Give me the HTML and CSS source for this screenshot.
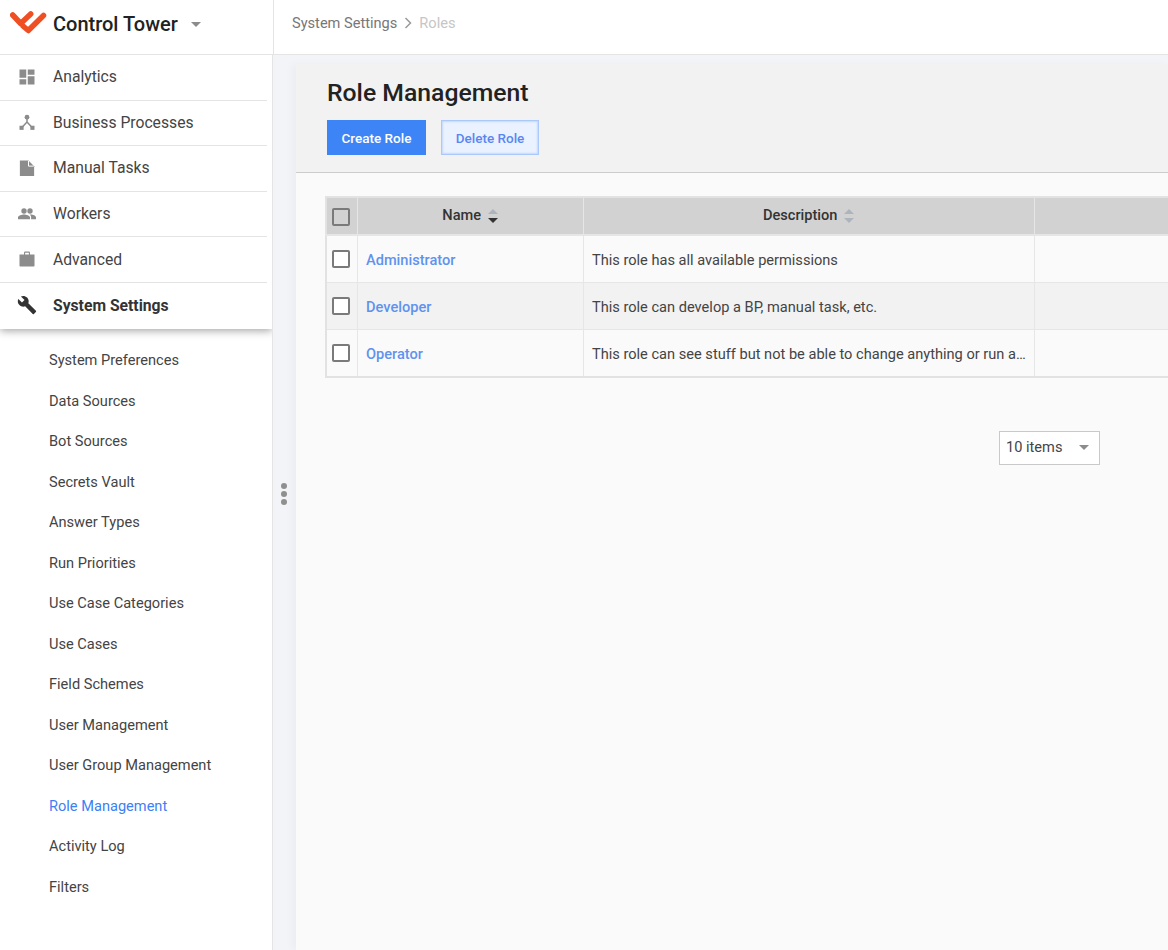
FILE: index.html
```html
<!DOCTYPE html>
<html lang="en">
<head>
    <meta charset="UTF-8">
    <title>Role Management</title>
    <link rel="stylesheet" href="styles.css">
</head>
<body>
    <div class="app">
        <div class="sidebar">
            <div class="brand">
                <svg class="brand-logo" width="37" height="25" viewBox="0 0 37 25">
                    <path d="M2.700 6 L10.700 14.500 L20.700 5 M13 17 L18.300 21.500 L33.500 6.500" fill="none" stroke="#f04e23" stroke-width="5.500" stroke-linecap="round" stroke-linejoin="round"/>
                </svg>
                <span class="brand-name">Control Tower</span>
                <span class="caret brand-caret"></span>
            </div>
            <div class="sidebar-body">
                <div class="nav-main">
                    <div class="nav-item">
                        <svg class="nav-icon" viewBox="0 0 24 24"><path d="M2 2h9v11H2zM13 2h9v7h-9zM13 11h9v11h-9zM2 15h9v7H2z"/></svg>
                        <span>Analytics</span>
                    </div>
                    <div class="nav-item">
                        <svg class="nav-icon" viewBox="0 0 24 24"><circle cx="12" cy="5.500" r="3.200"/><rect x="2" y="17" width="5.500" height="5.500"/><rect x="16.500" y="17" width="5.500" height="5.500"/><path d="M12 6v6.500M12 12L5.500 19M12 12l6.500 7" fill="none" stroke="#8c8c8c" stroke-width="2"/></svg>
                        <span>Business Processes</span>
                    </div>
                    <div class="nav-item">
                        <svg class="nav-icon" viewBox="0 0 24 24"><path d="M2.500 2H14l7.500 7.500V22.500H2.500z"/><path d="M14 2.500v7h7" fill="none" stroke="#fff" stroke-width="1.300"/></svg>
                        <span>Manual Tasks</span>
                    </div>
                    <div class="nav-item">
                        <svg class="nav-icon" viewBox="0 0 24 24"><circle cx="8" cy="8" r="3.600"/><circle cx="16" cy="8" r="3.600"/><path d="M0 19v-2.500C0 14 5 12.500 8 12.500s8 1.500 8 4V19zM17.500 19v-2.500c0-1.500-.8-2.800-2-3.700.5-.3 1-.3 1.500-.3 3 0 7 1.500 7 4V19z"/></svg>
                        <span>Workers</span>
                    </div>
                    <div class="nav-item">
                        <svg class="nav-icon" viewBox="0 0 24 24"><path d="M8 6V3.500A1.500 1.500 0 0 1 9.500 2h5A1.500 1.500 0 0 1 16 3.500V6h6v15a1 1 0 0 1-1 1H3a1 1 0 0 1-1-1V6zm1.500 0h5V3.500h-5z" fill-rule="evenodd"/></svg>
                        <span>Advanced</span>
                    </div>
                    <div class="nav-item nav-active">
                        <svg class="nav-icon" viewBox="0 0 24 24"><path d="M22.700 19l-9.100-9.100c.9-2.300.4-5-1.500-6.900-2-2-5-2.400-7.400-1.300L9 6 6 9 1.600 4.700C.4 7.100.9 10.100 2.900 12.100c1.900 1.900 4.600 2.400 6.900 1.500l9.100 9.100c.4.400 1 .4 1.400 0l2.300-2.300c.5-.4.500-1.100.100-1.400z"/></svg>
                        <span>System Settings</span>
                    </div>
                </div>
                <div class="nav-sub">
                    <div class="sub-item">System Preferences</div>
                    <div class="sub-item">Data Sources</div>
                    <div class="sub-item">Bot Sources</div>
                    <div class="sub-item">Secrets Vault</div>
                    <div class="sub-item">Answer Types</div>
                    <div class="sub-item">Run Priorities</div>
                    <div class="sub-item">Use Case Categories</div>
                    <div class="sub-item">Use Cases</div>
                    <div class="sub-item">Field Schemes</div>
                    <div class="sub-item">User Management</div>
                    <div class="sub-item">User Group Management</div>
                    <div class="sub-item sub-active">Role Management</div>
                    <div class="sub-item">Activity Log</div>
                    <div class="sub-item">Filters</div>
                </div>
            </div>
        </div>

        <div class="main">
            <div class="topbar">
                <span class="crumb">System Settings</span>
                <svg class="crumb-sep" width="8" height="12" viewBox="0 0 8 12"><path d="M1.500 1l5 5-5 5" fill="none" stroke="#9a9a9a" stroke-width="1.500"/></svg>
                <span class="crumb crumb-current">Roles</span>
            </div>
            <div class="workspace">
                <div class="resizer">
                    <span class="dot"></span>
                    <span class="dot"></span>
                    <span class="dot"></span>
                </div>
                <div class="panel">
                    <div class="panel-header">
                        <h1 class="panel-title">Role Management</h1>
                        <div class="actions">
                            <button class="btn btn-primary">Create Role</button>
                            <button class="btn btn-secondary">Delete Role</button>
                        </div>
                    </div>
                    <div class="panel-body">
                        <table class="grid">
                            <thead>
                                <tr>
                                    <th class="col-check"><span class="checkbox"></span></th>
                                    <th class="col-name">Name <span class="sort sort-down"></span></th>
                                    <th class="col-desc">Description <span class="sort"></span></th>
                                    <th class="col-rest"></th>
                                </tr>
                            </thead>
                            <tbody>
                                <tr>
                                    <td><span class="checkbox"></span></td>
                                    <td><a class="role-link">Administrator</a></td>
                                    <td class="desc">This role has all available permissions</td>
                                    <td></td>
                                </tr>
                                <tr class="row-alt">
                                    <td><span class="checkbox"></span></td>
                                    <td><a class="role-link">Developer</a></td>
                                    <td class="desc">This role can develop a BP, manual task, etc.</td>
                                    <td></td>
                                </tr>
                                <tr class="row-last">
                                    <td><span class="checkbox"></span></td>
                                    <td><a class="role-link">Operator</a></td>
                                    <td class="desc">This role can see stuff but not be able to change anything or run anything at all</td>
                                    <td></td>
                                </tr>
                            </tbody>
                        </table>
                        <div class="pager">
                            <div class="page-size">
                                <span>10 items</span>
                                <span class="caret"></span>
                            </div>
                        </div>
                    </div>
                </div>
            </div>
        </div>
    </div>
</body>
</html>
```

FILE: styles.css
```css
* {
    margin: 0;
    padding: 0;
    box-sizing: border-box;
}

html, body {
    height: 100%;
    overflow: hidden;
}

body {
    font-family: Roboto, 'Liberation Sans', sans-serif;
    font-size: 15.7px;
    color: #333;
    background: #fff;
}

.app {
    display: flex;
    height: 950px;
}

/* sidebar */
.sidebar {
    width: 274px;
    flex-shrink: 0;
    background: #f2f4f8;
}

.brand {
    height: 55px;
    display: flex;
    align-items: center;
    padding: 0 0 6px 10px;
    background: #fff;
    border-right: 1px solid #e4e4e4;
    border-bottom: 1px solid #e4e4e4;
}

.brand-logo {
    margin-right: 6px;
    margin-top: -5px;
}

.brand-name {
    font-size: 20px;
    font-weight: 500;
    color: #222;
}

.brand-caret {
    margin-left: 13px;
}

.caret {
    display: inline-block;
    width: 0;
    height: 0;
    border-left: 5px solid transparent;
    border-right: 5px solid transparent;
    border-top: 5px solid #8c8c8c;
}

.sidebar-body {
    width: 273px;
    height: 895px;
    background: #fff;
    border-right: 1px solid #e4e4e4;
}

.nav-main {
    box-shadow: 0 2px 8px rgba(0, 0, 0, 0.35);
    clip-path: inset(0 0 -20px 0);
    background: #fff;
}

.nav-item {
    width: 267px;
    height: 45.6px;
    display: flex;
    align-items: center;
    padding-left: 18px;
    padding-bottom: 1px;
    border-bottom: 1px solid #e4e4e4;
    color: #444;
}

.nav-item:last-child {
    width: 272px;
    border-bottom: none;
}

.nav-icon {
    width: 18px;
    height: 18px;
    fill: #8c8c8c;
    margin-right: 17px;
    flex-shrink: 0;
}

.nav-active {
    font-weight: 700;
    color: #333;
}

.nav-active .nav-icon {
    fill: #333;
    width: 20px;
    height: 20px;
    margin-left: -1px;
    margin-right: 16px;
}

.nav-sub {
    padding-top: 11.5px;
}

.sub-item {
    height: 40.5px;
    line-height: 40.5px;
    padding-left: 49px;
    font-size: 14.6px;
    color: #444;
}

.sub-active {
    color: #3d7ff5;
}

/* main area */
.main {
    flex: 1;
    min-width: 0;
    display: flex;
    flex-direction: column;
}

.topbar {
    height: 55px;
    flex-shrink: 0;
    display: flex;
    align-items: center;
    padding-left: 18px;
    padding-bottom: 8px;
    background: #fff;
    border-bottom: 1px solid #e4e4e4;
    font-size: 14.6px;
}

.crumb {
    color: #777;
}

.crumb-sep {
    margin: 0 7px;
}

.crumb-current {
    color: #c6c6c6;
}

.workspace {
    flex: 1;
    display: flex;
    background: #f2f4f8;
    padding-top: 9px;
}

.resizer {
    width: 22px;
    flex-shrink: 0;
    display: flex;
    flex-direction: column;
    align-items: center;
    gap: 2px;
    padding-top: 419px;
    padding-right: 2px;
}

.dot {
    width: 6px;
    height: 6px;
    border-radius: 50%;
    background: #8f8f8f;
}

.panel {
    flex: 1;
    min-width: 0;
    background: #fafafa;
    box-shadow: -4px 0 8px rgba(0, 0, 0, 0.03);
}

.panel-header {
    height: 109px;
    padding: 14px 0 0 31px;
    background: #f2f2f2;
    border-bottom: 1px solid #ccc;
}

.panel-title {
    font-size: 24.75px;
    font-weight: 500;
    line-height: 30px;
    color: #222;
}

.actions {
    display: flex;
    gap: 15px;
    margin-top: 12px;
}

.btn {
    height: 35px;
    font-family: inherit;
    font-size: 13.5px;
    font-weight: 500;
    border: none;
}

.btn-primary {
    width: 99px;
    background: #3d84f7;
    color: #fff;
}

.btn-secondary {
    width: 98px;
    background: #ebf2ff;
    color: #5a86ef;
    border: 1px solid #abc8fb;
    box-shadow: inset 0 0 2px 1px #c3d8fc;
}

.panel-body {
    padding: 23px 0 0 29px;
    overflow: hidden;
}

.grid {
    width: 1000px;
    table-layout: fixed;
    border-collapse: collapse;
    border: 2px solid #e2e2e2;
    font-size: 14.6px;
}

.grid th {
    height: 38px;
    padding-bottom: 2px;
    background: #d2d2d2;
    font-weight: 500;
    color: #333;
    border-right: 1px solid #e6e6e6;
    border-bottom: 2px solid #e6e6e6;
    text-align: center;
}

.grid th:first-child {
    padding: 0 2px 0 0;
}

.grid td {
    height: 47px;
    padding: 3px 7px 0 8.5px;
    border-right: 1px solid #e6e6e6;
    border-bottom: 1px solid #e6e6e6;
    color: #444;
}

.grid td:first-child {
    padding: 0 2px 0 0;
    text-align: center;
}

.grid .row-last td {
    height: 48px;
    padding-bottom: 1px;
}

.col-check {
    width: 31px;
}

.col-name {
    width: 226px;
}

.col-desc {
    width: 451px;
}

.row-alt td {
    background: #f2f2f2;
}

.desc {
    white-space: nowrap;
    overflow: hidden;
    text-overflow: ellipsis;
}

.role-link {
    color: #5f93ee;
    font-weight: 500;
}

.checkbox {
    display: inline-block;
    width: 18px;
    height: 18px;
    border: 2px solid #7a7a7a;
    border-radius: 2px;
    vertical-align: middle;
    background: #fff;
}

th .checkbox {
    background: transparent;
}

.sort {
    display: inline-block;
    position: relative;
    width: 10px;
    height: 14px;
    margin-left: 3px;
    vertical-align: -3px;
}

.sort::before, .sort::after {
    content: "";
    position: absolute;
    left: 0;
    border-left: 5px solid transparent;
    border-right: 5px solid transparent;
}

.sort::before {
    top: 0;
    border-bottom: 5px solid #aeb4bb;
}

.sort::after {
    bottom: 0;
    border-top: 5px solid #aeb4bb;
}

.sort-down::after {
    border-top-color: #333;
}

.pager {
    width: 775px;
    display: flex;
    justify-content: flex-end;
    margin-top: 53px;
}

.page-size {
    width: 101px;
    height: 34px;
    display: flex;
    align-items: center;
    justify-content: space-between;
    padding: 0 10px 2px 6px;
    background: #fff;
    border: 1px solid #c9c9c9;
    color: #444;
    font-size: 14.6px;
}
```
